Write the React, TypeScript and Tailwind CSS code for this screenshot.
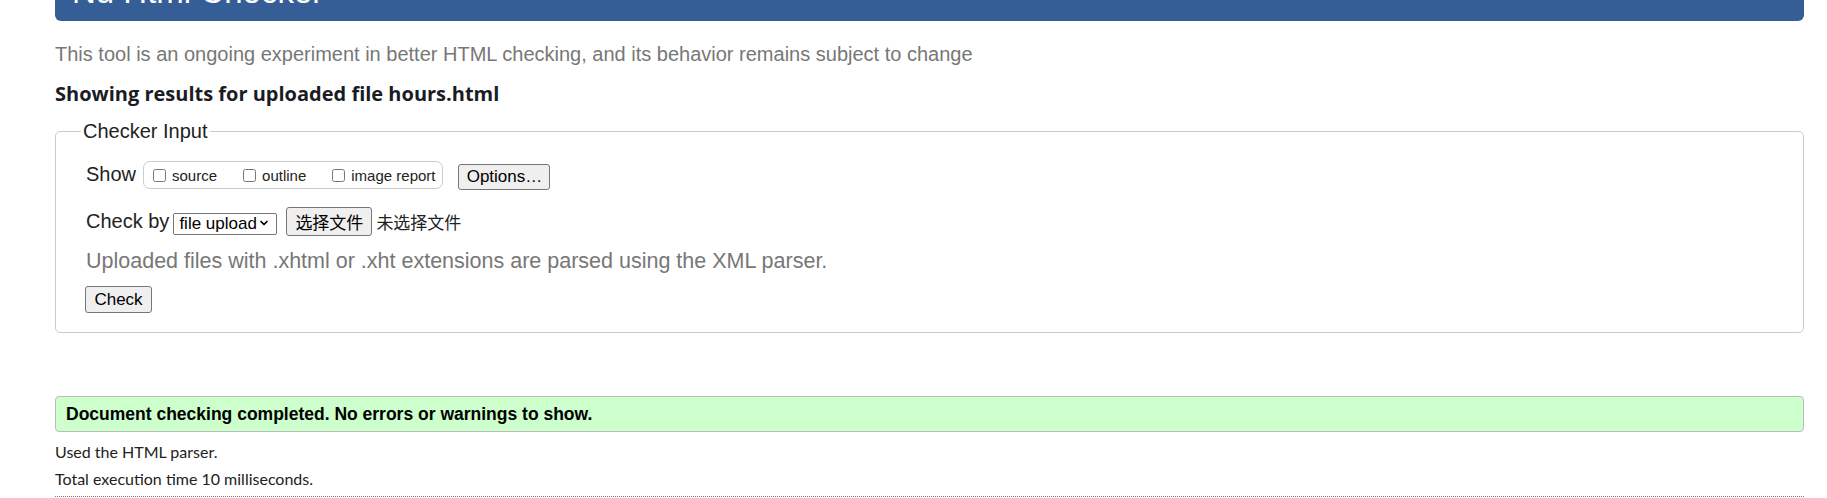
import { ChevronDown } from 'lucide-react';

// Nu Html Checker — result page after an uploaded file was checked.

const ARIAL = "font-['Liberation_Sans',Arial,sans-serif]";
const SEGOE = "font-['Lato',sans-serif]";

function ShowOption({ label }: { label: string }) {
  return (
    <label className="flex items-center gap-[6px]">
      <input type="checkbox" className="w-[13px] h-[13px] m-0" />
      <span className="text-[15px] leading-[17px] text-[#222]">{label}</span>
    </label>
  );
}

export default function App() {
  return (
    <div className={`${ARIAL} bg-white pl-[55px] pr-[23px] text-[#222]`}>
      {/* Title banner, scrolled mostly out of view */}
      <div className="h-[21px] overflow-hidden flex flex-col justify-end bg-[#365e96] rounded-b-[6px] pl-[17px] pb-[13px]">
        <h1 className="text-[33px] leading-[33px] text-white shrink-0">Nu Html Checker</h1>
      </div>

      <p className="mt-[21px] text-[20px] leading-[24px] text-[#777]">
        This tool is an ongoing experiment in better HTML checking, and its behavior remains subject to change
      </p>

      <h2 className="font-['Open_Sans',sans-serif] mt-[14px] text-[20px] leading-[27px] font-bold text-[#1b1b24]">
        Showing results for uploaded file hours.html
      </h2>

      {/* Checker input form */}
      <fieldset className="mt-[12px] border border-[#ccc] rounded-[5px] pl-[30px] pr-[30px] pt-[18px] pb-[19px]">
        <legend className="ml-[-5px] px-[2px] text-[20px] leading-[24px]">Checker Input</legend>

        <div className="flex items-start">
          <span className="mt-[2px] text-[20px] leading-[23px]">Show</span>
          <div className="ml-[7px] h-[28px] border border-[#ccc] rounded-[7px] flex items-center pl-[9px] pr-[7px] gap-[26px]">
            <ShowOption label="source" />
            <ShowOption label="outline" />
            <ShowOption label="image report" />
          </div>
          <button className="ml-[15px] mt-[3px] h-[26px] w-[92px] bg-[#efefef] border border-[#767676] rounded-[3px] text-[17px] leading-[20px] text-black">
            Options…
          </button>
        </div>

        <div className="mt-[17px] flex items-start">
          <span className="mt-[3px] text-[20px] leading-[23px]">Check by</span>
          <span className="relative ml-[4px] mt-[5px]">
            <select className="appearance-none h-[22px] w-[104px] border border-[#767676] rounded-[2px] pl-[5px] text-[17px] leading-[20px] text-black bg-white">
              <option>file upload</option>
            </select>
            <ChevronDown
              size={12}
              strokeWidth={3.5}
              className="absolute right-[7px] top-[5px] text-black pointer-events-none"
            />
          </span>
          <button className="ml-[9px] h-[29px] w-[86px] bg-[#efefef] border border-[#767676] rounded-[3px] text-[17px] leading-[20px] text-black font-['Noto_Sans_CJK_SC',sans-serif]">
            选择文件
          </button>
          <span className="ml-[4px] mt-[4px] text-[17px] leading-[21px] font-['Noto_Sans_CJK_SC',sans-serif]">
            未选择文件
          </span>
        </div>

        <p className="mt-[13px] text-[21.5px] leading-[24px] text-[#777]">
          Uploaded files with .xhtml or .xht extensions are parsed using the XML parser.
        </p>

        <button className="mt-[13px] h-[27px] w-[67px] ml-[-1px] bg-[#efefef] border border-[#767676] rounded-[3px] text-[17px] leading-[20px] text-black">
          Check
        </button>
      </fieldset>

      {/* Result summary */}
      <div className="mt-[63px] h-[36px] border border-[#bbb] rounded-[4px] bg-[#ccffcc] pl-[10px] flex items-center">
        <p className="text-[17.5px] leading-[20px] font-bold text-black">
          Document checking completed. No errors or warnings to show.
        </p>
      </div>

      <div className={`${SEGOE} mt-[6px] text-[16px] leading-[27px] text-[#222]`}>
        <p>Used the HTML parser.</p>
        <p>Total execution time 10 milliseconds.</p>
      </div>
      <div className="mt-[4px] border-t border-dotted border-[#777]" />
    </div>
  );
}
